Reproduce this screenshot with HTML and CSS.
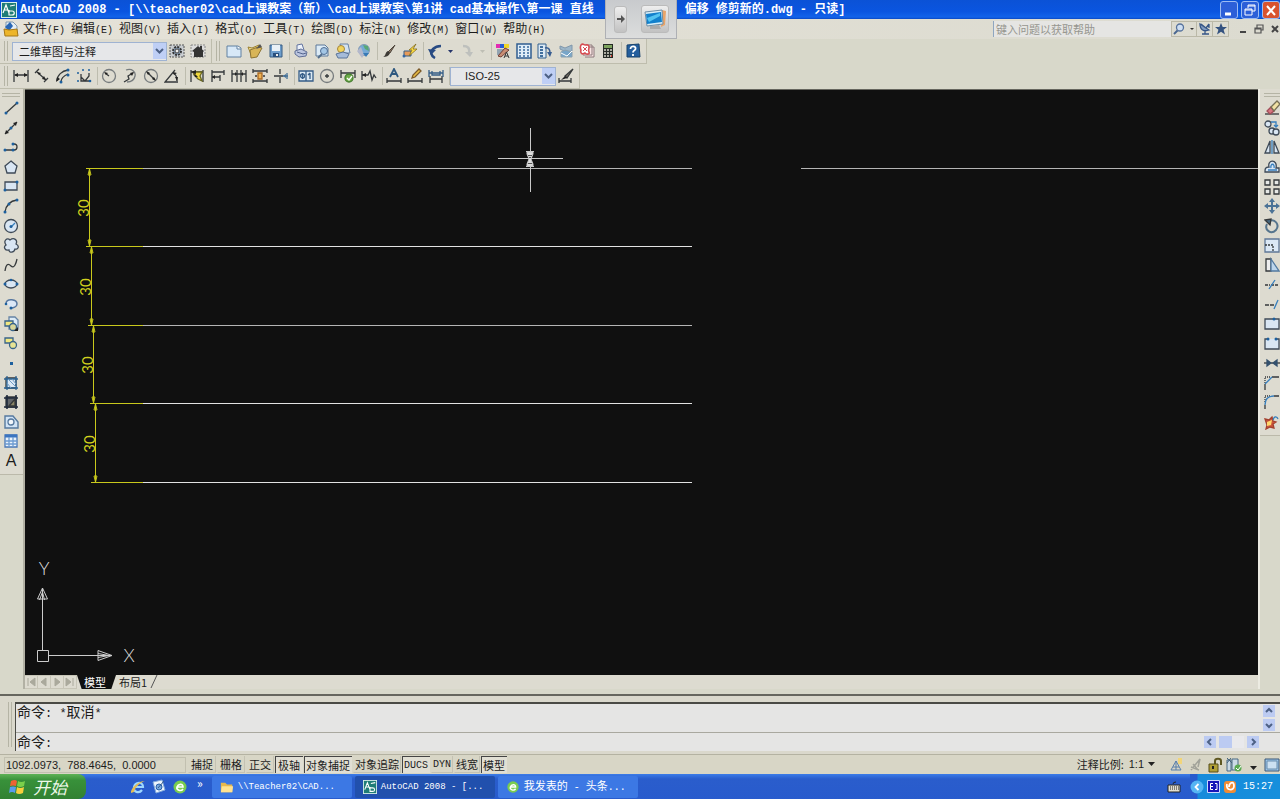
FILE: index.html
```html
<!DOCTYPE html>
<html lang="zh-CN">
<head>
<meta charset="utf-8">
<title>AutoCAD 2008</title>
<link rel="stylesheet" href="styles.css">
</head>
<body>
<header class="titlebar">
  <svg class="app-icon" width="16" height="16" viewBox="0 0 16 16"><rect x=".5" y=".5" width="15" height="15" fill="#1f7d77" stroke="#d8efe8"/><path d="M2 11L5 3l3 8M3 8h4M8 8v5h3c3 0 3-4 0-4H8M9 4l5-1" fill="none" stroke="#fff" stroke-width="1.2"/></svg>
  <h1 class="title"><span>AutoCAD 2008 - [\\teacher02\cad上课教案（新）\cad上课教案\第1讲 cad基本操作\第一课 直线</span><span class="title-rest">偏移 修剪新的.dwg - 只读]</span></h1>
  <div class="window-buttons">
    <button class="win" aria-label="最小化"><svg width="16" height="16" viewBox="0 0 16 16"><path d="M4 12h6" stroke="#fff" stroke-width="3"/></svg></button>
    <button class="win" aria-label="还原"><svg width="16" height="16" viewBox="0 0 16 16"><path d="M6 6V3h7v6h-3M3 7h7v6H3zM3 8h7M6 4h7" fill="none" stroke="#fff" stroke-width="1"/></svg></button>
    <button class="win win-close" aria-label="关闭"><svg width="16" height="16" viewBox="0 0 16 16"><path d="M4 4l8 9M12 4l-8 9" stroke="#fff" stroke-width="2"/></svg></button>
  </div>
</header>

<div class="floater">
  <button class="float-arrow" aria-label="展开"><svg width="10" height="12" viewBox="0 0 10 12"><path d="M1 5h4V2l4 4-4 4V7H1z" fill="#555"/></svg></button>
  <button class="float-screen" aria-label="屏幕"><svg width="26" height="26" viewBox="0 0 26 26"><path d="M20 4l4 1-1 14-4 2z" fill="#e8a469"/><path d="M3 6l17-2 1 14-16 2z" fill="#d9eef8" stroke="#6e8da5"/><path d="M4 8l15-2 1 10-15 2z" fill="#1280cc"/><path d="M5 12l13-5v3L7 16z" fill="#53c3f1"/><path d="M8 20l9-1 2 4H8z" fill="#aaa"/></svg></button>
</div>

<nav class="menubar">
  <svg width="16" height="16" viewBox="0 0 16 16"><path d="M3 1h7l4 4v9H3z" fill="#e5eef5" stroke="#7d98b1"/><path d="M2 6l5-5 3 4-4 5z" fill="#2866b4"/><path d="M1 8l5 1 8-1 1 7H2z" fill="#edb52a" stroke="#a67818"/></svg>
  <button>文件<span class="latin">(F)</span></button>
  <button>编辑<span class="latin">(E)</span></button>
  <button>视图<span class="latin">(V)</span></button>
  <button>插入<span class="latin">(I)</span></button>
  <button>格式<span class="latin">(O)</span></button>
  <button>工具<span class="latin">(T)</span></button>
  <button>绘图<span class="latin">(D)</span></button>
  <button>标注<span class="latin">(N)</span></button>
  <button>修改<span class="latin">(M)</span></button>
  <button>窗口<span class="latin">(W)</span></button>
  <button>帮助<span class="latin">(H)</span></button>
  <div class="infocenter">
    <input class="search" type="text" placeholder="键入问题以获取帮助" aria-label="键入问题以获取帮助">
    <button class="info info-wide" aria-label="搜索"><svg width="24" height="14" viewBox="0 0 24 14"><path d="M2 12l4-4" stroke="#4a6791" stroke-width="2"/><circle cx="8" cy="5.500" r="3.500" fill="#cfdff2" stroke="#56729c" stroke-width="1.300"/><path d="M18 6h4l-2 2z" fill="#333"/></svg></button>
    <button class="info" aria-label="通讯中心"><svg width="14" height="14" viewBox="0 0 14 14"><path d="M2 2c0 6 4 8 9 6zM4 12h7M7 9v3M3 2l5 4M8 6l3-4M11 2v4" fill="#7f9ac0" stroke="#365687" stroke-width="1.300"/></svg></button>
    <button class="info" aria-label="收藏夹"><svg width="14" height="14" viewBox="0 0 14 14"><path d="M7 1l1.700 4H13l-3.400 2.700L11 12.500 7 9.700l-4 2.800 1.400-4.800L1 5h4.300z" fill="#34527f"/></svg></button>
  </div>
  <div class="doc-buttons">
    <button aria-label="最小化文档"><svg width="10" height="10" viewBox="0 0 10 10"><path d="M2 8h6" stroke="#444" stroke-width="2"/></svg></button>
    <button aria-label="还原文档"><svg width="10" height="10" viewBox="0 0 10 10"><path d="M3 4V1h6v5H7M1 4h6v5H1zM1 5h6" fill="none" stroke="#555" stroke-width="1.200"/></svg></button>
    <button aria-label="关闭文档"><svg width="10" height="10" viewBox="0 0 10 10"><path d="M2 2l6 6M8 2L2 8" stroke="#444" stroke-width="2"/></svg></button>
  </div>
</nav>

<div class="toolrow">
  <div class="toolbar">
    <i class="grip"></i>
    <div class="combo combo-workspace"><select aria-label="工作空间"><option>二维草图与注释</option></select><svg width="13" height="16" viewBox="0 0 13 16"><path d="M3 6l3.500 3.500L10 6" fill="none" stroke="#4d6185" stroke-width="2"/></svg></div>
    <div class="tools">
      <button aria-label="工作空间设置"><svg viewBox="0 0 16 16"><path d="M1 2h14v12H1z" fill="#c9cdd1" stroke="#555" stroke-dasharray="2 1"/><circle cx="8" cy="8" r="4" fill="#8fa5bd" stroke="#333" stroke-width="2" stroke-dasharray="2 1.100"/><circle cx="8" cy="8" r="2" fill="#eee" stroke="#444"/></svg></button>
      <button aria-label="我的工作空间"><svg viewBox="0 0 16 16"><path d="M1 2h14v12H1z" fill="#ddd" stroke="#888" stroke-dasharray="2 1"/><path d="M2 8l6-5 6 5-1 1v5H4V9z" fill="#333"/><path d="M10 3h2v4h-2z" fill="#333"/></svg></button>
    </div>
  </div>
  <div class="toolbar">
    <i class="grip"></i>
    <div class="tools">
      <button aria-label="新建"><svg viewBox="0 0 16 16"><path d="M1 3h11l3 2v9H1z" fill="#d7e8f7" stroke="#6180a1"/><path d="M11 3v3h4" fill="#fff" stroke="#6180a1"/></svg></button>
      <button aria-label="打开"><svg viewBox="0 0 16 16"><path d="M1 4l4 1 7-3-2 9-5 3z" fill="#f0dc92" stroke="#9c812f"/><path d="M3 7l8-3 4 1-5 9-6 1z" fill="#d8b558" stroke="#8c7434"/><path d="M9 6l4-5 2 3z" fill="#555"/></svg></button>
      <button aria-label="保存"><svg viewBox="0 0 16 16"><path d="M2 2h12v12H2z" fill="#6d9dcc" stroke="#385c83"/><path d="M4 2h8v6H4z" fill="#e9f0f6"/><path d="M5 10h6v4H5z" fill="#294f7d"/><path d="M8 11h2v2H8z" fill="#eee"/></svg></button>
      <i class="sep"></i>
      <button aria-label="打印"><svg viewBox="0 0 16 16"><path d="M4 7V2l5-1 2 6" fill="#edf2fa" stroke="#6374a0"/><path d="M2 8l6-2 6 3-1 4-7 1-4-3z" fill="#bbc5df" stroke="#5f6e96"/><path d="M4 9l6 2 3-1" fill="none" stroke="#51638d"/></svg></button>
      <button aria-label="打印预览"><svg viewBox="0 0 16 16"><path d="M2 2h9l3 3v8H2z" fill="#dcebf6" stroke="#5c7899"/><circle cx="10" cy="8" r="3.500" fill="#a3c6e5" stroke="#506e94"/><path d="M8 11l-4 4" stroke="#516c8b" stroke-width="2"/></svg></button>
      <button aria-label="发布"><svg viewBox="0 0 16 16"><path d="M5 1h8l2 9H7z" fill="#d3e2f0" stroke="#6681a5"/><circle cx="6" cy="6" r="3.500" fill="#f1d35c" stroke="#a4853b"/><path d="M1 11l7-2 6 2-2 4H3z" fill="#a5bbd9" stroke="#5a7499"/></svg></button>
      <button aria-label="三维 DWF"><svg viewBox="0 0 16 16"><circle cx="8" cy="7" r="5.500" fill="#75a9d5" stroke="#8298b3"/><path d="M7 2l5 1 1 5-4-2z" fill="#59a875"/><path d="M1 8l4-4 3 8-2 3z" fill="#b3b8cb"/><path d="M7 10l3 4 3-4z" fill="#387ab6"/></svg></button>
      <i class="sep"></i>
      <button aria-label="特性匹配"><svg viewBox="0 0 16 16"><path d="M14 2l-7 7 2 1z" fill="#8a7561" stroke="#4d453c"/><path d="M7 8l2 2c-1 3-4 4-7 4 3-1 2-5 5-6z" fill="#3e3b36"/></svg></button>
      <button aria-label="块编辑器"><svg viewBox="0 0 16 16"><path d="M2 8h7v5H2z" fill="#e79b59" stroke="#395f87"/><path d="M14 1L7 7h3l-3 6 8-7h-4z" fill="#ffde43" stroke="#826c22" stroke-width=".8"/><circle cx="2" cy="13" r="1.500" fill="#3467a4"/></svg></button>
      <i class="sep"></i>
      <button aria-label="放弃"><svg viewBox="0 0 16 16"><path d="M8 15c-4-2-5-6-2-9 2-2 5-3 8-3" fill="none" stroke="#284b83" stroke-width="2.500"/><path d="M1 6l8 1-5 5z" fill="#284b83"/></svg></button>
      <button class="drop" aria-label="放弃列表"><svg viewBox="0 0 8 16"><path d="M1 7h5L3.500 10z" fill="#25346a"/></svg></button>
      <button aria-label="重做"><svg viewBox="0 0 16 16"><path d="M4 3c5 0 7 2 6 7" fill="none" stroke="#bec0bd" stroke-width="2.500"/><path d="M6 9h8l-3 5z" fill="#bec0bd"/></svg></button>
      <button class="drop" aria-label="重做列表"><svg viewBox="0 0 8 16"><path d="M1 7h5L3.500 10z" fill="#bebeb4"/></svg></button>
      <i class="sep"></i>
      <button aria-label="特性"><svg viewBox="0 0 16 16"><path d="M1 1h4v4H1z" fill="#e22bb3"/><path d="M5 1h4v4H5z" fill="#285bd7"/><path d="M9 1h5v4H9z" fill="#efd629"/><path d="M2 7h7M2 9h6M2 11h5" stroke="#486c93"/><path d="M3 13l7-8 4 2-8 7z" fill="#c88d74" stroke="#733e34"/><path d="M9 15l2.500-6L14 15M10 13h3" fill="none" stroke="#333"/></svg></button>
      <button aria-label="设计中心"><svg viewBox="0 0 16 16"><path d="M1 1h14v14H1z" fill="#e0edf7" stroke="#315e90" stroke-width="1.500"/><path d="M3 4h2M7 4h2M11 4h2M3 7h2M7 7h2M11 7h2M3 10h2M7 10h2M11 10h2M3 13h2M7 13h2M11 13h2" stroke="#396a9e" stroke-width="1.500"/></svg></button>
      <button aria-label="工具选项板"><svg viewBox="0 0 16 16"><path d="M1 1h8v14H1z" fill="#dce9f4" stroke="#33618e"/><path d="M3 4h3M3 7h3M3 10h3M3 13h3" stroke="#416f9d" stroke-width="2"/><path d="M8 5c4-1 5 2 5 5" fill="none" stroke="#385d91" stroke-width="1.500"/><path d="M10 9h5l-2 5z" fill="#385d91"/></svg></button>
      <button aria-label="图纸集"><svg viewBox="0 0 16 16"><path d="M2 3l5 2 7-3v6L8 9 2 6z" fill="#9db7c9" stroke="#8097ab"/><path d="M3 9l4-2 7 2v5H3z" fill="#78a6c9" stroke="#8ba0ad"/><path d="M3 10l6 3 5-5" stroke="#fff" fill="none"/></svg></button>
      <button aria-label="标记集"><svg viewBox="0 0 16 16"><path d="M5 4h10v10H6M3 2h10v10H4" fill="#f9e3e2" stroke="#8a797b"/><path d="M2 2c2-2 3 0 4 0s4-1 4 2-1 3 0 5-2 3-4 1c-3 2-5 0-4-3-1-2-1-3 0-5z" fill="#fff" stroke="#d64c52" stroke-width="1.600"/><path d="M4 4l4 4M8 4L4 8" stroke="#d64c52"/></svg></button>
      <button aria-label="快速计算器"><svg viewBox="0 0 16 16"><path d="M3 1h10v14H3z" fill="#252a25"/><path d="M4 2h8v3H4z" fill="#7da35e"/><path d="M4 7h8M4 10h8M4 13h8" stroke="#d8d7ca" stroke-width="1.500" stroke-dasharray="2 1"/><path d="M11 13h1" stroke="#cb322a" stroke-width="2"/></svg></button>
      <i class="sep"></i>
      <button aria-label="帮助"><svg viewBox="0 0 16 16"><path d="M2 2l12-1 1 13H2z" fill="#245e9d" stroke="#17426d"/><path d="M5.500 6c0-4 6-3 5 0-.5 1.500-2.500 1.500-2.500 3.500M8 11v2" fill="none" stroke="#fff" stroke-width="1.800"/></svg></button>
    </div>
  </div>
</div>

<div class="toolrow">
  <div class="toolbar toolbar-dim">
    <i class="grip"></i>
    <div class="tools ink">
      <button aria-label="线性"><svg viewBox="0 0 16 16"><path d="M1 2v12M15 2v12M2 7h12"/><path class="solid" d="M1 7l4-2v4zM15 7l-4-2v4z"/></svg></button>
      <button aria-label="对齐"><svg viewBox="0 0 16 16"><path d="M1 5l4-4M10 14l4-4M3 4l9 8"/><path class="solid" d="M3 4l4 1-2 2zM12 12l-4-1 2-3z"/></svg></button>
      <button aria-label="弧长"><svg viewBox="0 0 16 16"><path d="M2 13C2 7 7 3 13 2M6 14c0-4 2-6 7-8"/><path class="solid" d="M1 14l1-5 3 2z"/><g class="dot"><circle cx="13" cy="2" r="1.500"/><circle cx="13" cy="7" r="1.500"/><circle cx="6" cy="14" r="1.500"/></g></svg></button>
      <button aria-label="坐标"><svg viewBox="0 0 16 16"><path d="M5 6v7h9M5 9l4 4 4-5V5"/><g class="dot"><circle cx="7" cy="2" r="1"/><circle cx="13" cy="2" r="1"/><circle cx="2" cy="5" r="1"/><circle cx="2" cy="13" r="1"/><circle cx="14" cy="13" r="1.300"/></g></svg></button>
      <i class="sep"></i>
      <button aria-label="半径"><svg viewBox="0 0 16 16"><circle class="soft" cx="8" cy="8" r="6.500"/><path d="M4 5l4 3"/><path class="solid" d="M3 4l4 1-2 2z"/></svg></button>
      <button aria-label="折弯"><svg viewBox="0 0 16 16"><path class="soft" d="M4 2c6-2 10 2 9 6-1 5-4 6-8 6"/><path d="M2 14l5-3-1-3 5-3"/><path class="solid" d="M12 4L8 5l2 3z"/></svg></button>
      <button aria-label="直径"><svg viewBox="0 0 16 16"><circle class="soft" cx="8" cy="8" r="6.500"/><path d="M4 4l8 8"/><path class="solid" d="M3 3l4 2-2 2zM13 13l-4-2 2-2z"/></svg></button>
      <button aria-label="角度"><svg viewBox="0 0 16 16"><path d="M14 14H1L11 2M9 5c3 1 4 4 4 8"/><path class="solid" d="M9 4l4 1-3 2zM13 13l-2-4h3z"/></svg></button>
      <i class="sep"></i>
      <button aria-label="快速标注"><svg viewBox="0 0 16 16"><path d="M2 2v12M14 2v12M2 4h12"/><path d="M4 4l9 0-2 4 2 5-4-2-4-4z" fill="#f0d83d" stroke="#696723"/><path class="solid" d="M2 4l5-2v4zM5 5l4 4-3 0z"/></svg></button>
      <button aria-label="基线"><svg viewBox="0 0 16 16"><path d="M2 2v12M2 4h12M2 9h8M10 7v6M14 2v5"/><path class="solid" d="M2 9l3-2v4z"/></svg></button>
      <button aria-label="连续"><svg viewBox="0 0 16 16"><path d="M1 2v12M6 2v12M10 2v12M15 2v12M1 6h14"/><path class="solid" d="M6 6L4 4v4zM10 6l2-2v4z"/></svg></button>
      <button aria-label="标注间距"><svg viewBox="0 0 16 16"><path d="M1 1v4M15 1v4M1 11v4M15 11v4M1 3h14M1 13h14M3 8h2M11 8h2"/><path d="M6 5h4v6H6z" fill="#efb455" stroke="#a96922"/></svg></button>
      <button aria-label="标注打断"><svg viewBox="0 0 16 16"><path d="M7 1v5M7 9v6M1 8h9"/><path d="M10 8h5M14 5v6" stroke="#467198"/><path d="M10 8l3-2v4z" fill="#467198" stroke="none"/></svg></button>
      <i class="sep"></i>
      <button aria-label="公差"><svg viewBox="0 0 16 16"><path d="M1 3h14v10H1zM8 3v10" fill="#dce9f2" stroke="#365e88"/><circle cx="4.500" cy="8" r="2" stroke="#365e88"/><path d="M4.500 5v6M12 5v6M10 7l2-2" stroke="#365e88"/></svg></button>
      <button aria-label="圆心标记"><svg viewBox="0 0 16 16"><circle class="soft" cx="8" cy="8" r="6.500"/><path d="M8 6v4M6 8h4"/></svg></button>
      <button aria-label="检验"><svg viewBox="0 0 16 16"><path d="M1 2v8M15 2v8M1 5h14"/><circle cx="9" cy="10" r="4" fill="#6dac48" stroke="#467e32"/><path d="M7 10l2 2 3-4" stroke="#fff"/></svg></button>
      <button aria-label="折弯线性"><svg viewBox="0 0 16 16"><path d="M1 3v9M1 7h6l2-4 2 9 2-5 2 3"/><path class="solid" d="M1 7l4-2v4z"/></svg></button>
      <i class="sep"></i>
      <button aria-label="编辑标注"><svg viewBox="0 0 16 16"><path d="M1 10v5M15 10v5M1 13h14"/><path d="M4 9l4-8 4 8M6 6h4" stroke="#2e587f" stroke-width="1.800"/></svg></button>
      <button aria-label="编辑标注文字"><svg viewBox="0 0 16 16"><path d="M1 10v5M15 10v5M1 13h14"/><path d="M5 10l1-3 6-6 2 2-6 6z" fill="#e9bd43" stroke="#7b5928"/></svg></button>
      <button aria-label="标注更新"><svg viewBox="0 0 16 16"><path d="M2 8v7M14 8v7M2 11h12"/><path d="M1 2v7M15 2v7M1 5h14M4 3v4h8V3" stroke="#355d86"/></svg></button>
      <i class="sep"></i>
    </div>
    <div class="combo combo-dim"><select aria-label="标注样式"><option>ISO-25</option></select><svg width="13" height="16" viewBox="0 0 13 16"><path d="M3 6l3.500 3.500L10 6" fill="none" stroke="#4d6185" stroke-width="2"/></svg></div>
    <div class="tools ink">
      <button aria-label="标注样式管理"><svg viewBox="0 0 16 16"><path d="M1 10v5M13 10v5M1 13h12"/><path d="M15 1L7 8l2 2z" fill="#81776b"/><path class="solid" d="M7 8l2 2-6 2z"/></svg></button>
    </div>
  </div>
</div>

<main class="workspace">
  <aside class="side side-left">
    <div class="palette">
      <i class="grip-h"></i>
      <div class="stack stack-draw">
        <button aria-label="直线"><svg viewBox="0 0 16 16"><path d="M3 13L14 3"/><g class="dot"><circle cx="3" cy="13" r="1.500"/><circle cx="14" cy="3" r="1.500"/></g></svg></button>
        <button aria-label="构造线"><svg viewBox="0 0 16 16"><path d="M2 14L14 2"/><path class="solid" d="M2 14l1-4 3 3zM14 2l-4 1 3 3z"/><circle class="dot" cx="8" cy="8" r="1.500"/></svg></button>
        <button aria-label="多段线"><svg viewBox="0 0 16 16"><path d="M2 11h9c4 0 4-6 0-6"/><g class="dot"><circle cx="2" cy="11" r="1.500"/><circle cx="10" cy="11" r="1.500"/><circle cx="10" cy="5" r="1.500"/></g></svg></button>
        <button aria-label="正多边形"><svg viewBox="0 0 16 16"><path class="glass" d="M8 2l6 5-2 7H4L2 7z"/></svg></button>
        <button aria-label="矩形"><svg viewBox="0 0 16 16"><path class="glass" d="M2 4h12v8H2z"/><g class="dot"><circle cx="2" cy="12" r="1.500"/><circle cx="14" cy="4" r="1.500"/></g></svg></button>
        <button aria-label="圆弧"><svg viewBox="0 0 16 16"><path d="M2 14C3 7 7 3 14 2"/><g class="dot"><circle cx="2" cy="14" r="1.500"/><circle cx="6" cy="6" r="1.500"/><circle cx="14" cy="2" r="1.500"/></g></svg></button>
        <button aria-label="圆"><svg viewBox="0 0 16 16"><circle class="glass" cx="8" cy="8" r="6.500"/><path class="blue" d="M8 9l4-4"/><circle class="dot" cx="8" cy="8.500" r="1.500"/></svg></button>
        <button aria-label="修订云线"><svg viewBox="0 0 16 16"><path class="glass" d="M3 8C0 4 4 0 7 3c4-3 8 0 6 4 4 2 2 6-1 5-1 4-6 4-6 1-4 1-6-3-3-5z"/></svg></button>
        <button aria-label="样条曲线"><svg viewBox="0 0 16 16"><path d="M2 14c1-7 3-8 6-5s5-2 6-7"/></svg></button>
        <button aria-label="椭圆"><svg viewBox="0 0 16 16"><ellipse class="glass" cx="8" cy="8" rx="6" ry="4"/><g class="dot"><circle cx="2" cy="8" r="1.500"/><circle cx="14" cy="8" r="1.500"/><circle cx="8" cy="4" r="1.300"/></g></svg></button>
        <button aria-label="椭圆弧"><svg viewBox="0 0 16 16"><path d="M3 7c1-5 11-4 11 1 0 3-4 4-6 4" fill="#dce8f6" stroke="#5878a0" stroke-width="1.500"/><g class="dot"><circle cx="3" cy="8" r="1.300"/><circle cx="8" cy="12" r="1.500"/></g></svg></button>
        <button aria-label="插入块"><svg viewBox="0 0 16 16"><path d="M6 1h6l3 3v9H6z" fill="#dcebf7" stroke="#6684a5"/><path d="M2 5h8v5H2z" fill="#f1e881" stroke="#386489"/><circle cx="10" cy="11" r="3.500" fill="#d9d79a" stroke="#386489"/><path class="solid" d="M15 11v4h-4z"/></svg></button>
        <button aria-label="创建块"><svg viewBox="0 0 16 16"><path d="M2 3h8v5H2z" fill="#f1e881" stroke="#386489"/><circle cx="10" cy="10" r="3.500" fill="#e6e394" stroke="#386489"/></svg></button>
        <button aria-label="点"><svg viewBox="0 0 16 16"><path class="dot" d="M7 7h3v3H7z"/></svg></button>
        <button aria-label="图案填充"><svg viewBox="0 0 16 16"><path d="M3 3h10v10H3z" fill="#dbe8f4"/><path d="M4 1v14M13 1v14M1 4h14M1 13h14" stroke="#2d6595"/><path d="M4 8l4 5M5 4l8 8M9 4l4 5" stroke="#6f9dc6" stroke-width="1"/></svg></button>
        <button aria-label="渐变色"><svg viewBox="0 0 16 16"><path d="M3 3h10v10H3z" fill="#62666a"/><path d="M4 1v14M13 1v14M1 4h14M1 13h14" stroke="#202b3d" stroke-width="1.600"/><path d="M6 12l6-7v7z" fill="#8b8667"/></svg></button>
        <button aria-label="面域"><svg viewBox="0 0 16 16"><path d="M2 2h8l5 6v6H2z" fill="#d1e3f5" stroke="#56799e" stroke-width="1.400"/><circle cx="8" cy="8" r="3" fill="#f2f6fb" stroke="#56799e"/></svg></button>
        <button aria-label="表格"><svg viewBox="0 0 16 16"><path d="M2 2h12v12H2z" fill="#eaf2fb" stroke="#4a78b7"/><path d="M2 3h12" stroke="#3b74c0" stroke-width="3"/><path d="M2 8h12M2 11h12M6 4v10M10 4v10" stroke="#6c9bd1"/></svg></button>
        <button class="mtext" aria-label="多行文字">A</button>
      </div>
    </div>
  </aside>

  <section class="document">
    <div class="canvas">
      <svg class="drawing" width="100%" height="100%">
        <g class="object">
          <path class="dim" d="M118 78.500h549"/><path d="M118 156.500h549M118 313.500h549M118 392.500h549"/><path class="dim" d="M118 235.500h549"/>
          <line class="dim" x1="776" y1="78.500" x2="100%" y2="78.500"/>
        </g>
        <g class="measure">
          <path d="M61 78.500h57M61 156.500h57M63 235.500h55M65 313.500h53M66 392.500h52"/>
          <path d="M64.500 79v78M66.500 157v79M68.500 236v78M70.500 314v79"/>
          <path d="M63 85l1.500-6 1.500 6zM63 150l1.500 6 1.500-6zM65 163l1.500-6 1.500 6zM65 229l1.500 6 1.500-6zM67 242l1.500-6 1.500 6zM67 307l1.500 6 1.500-6zM69 320l1.500-6 1.500 6zM69 386l1.500 6 1.500-6z"/>
          <text transform="translate(64 118) rotate(-90)">30</text>
          <text transform="translate(66 197) rotate(-90)">30</text>
          <text transform="translate(68 275) rotate(-90)">30</text>
          <text transform="translate(70 354) rotate(-90)">30</text>
        </g>
        <g class="cursor">
          <path d="M473 68.500h65M505.500 38v64"/>
          <path class="glass-body" d="M502 62h6v2l-2 5 2 5v2h-6v-2l2-5-2-5z"/>
          <path d="M501 61.500h8M501 76.500h8"/><path class="sand" d="M503 65.500h4M504 67.500h2M503 73.500h4"/>
        </g>
      </svg>
      <svg class="ucs" width="120" height="120" viewBox="0 0 120 120">
        <path d="M12.500 95.500h11v11h-11zM17.500 95V33M24 100.500h63M17.500 33l-5 11h10zM17.500 37l-3 8M17.500 37l2 8M87 100.500l-14-5v10zM84 100.500l-11-2M84 100.500l-11 2"/>
        <text x="19" y="20">Y</text><text x="104" y="107">X</text>
      </svg>
    </div>
    <div class="tabs">
      <div class="tab-nav">
        <button aria-label="第一个"><svg viewBox="0 0 12 12"><path d="M3 2v8M10 2v8L5 6z"/></svg></button>
        <button aria-label="上一个"><svg viewBox="0 0 12 12"><path d="M8 2v8L3 6z"/></svg></button>
        <button aria-label="下一个"><svg viewBox="0 0 12 12"><path d="M4 2v8l5-4z"/></svg></button>
        <button aria-label="最后一个"><svg viewBox="0 0 12 12"><path d="M9 2v8M2 2v8l5-4z"/></svg></button>
      </div>
      <button class="tab tab-active">模型</button>
      <button class="tab">布局1</button>
      <svg class="tab-end" width="8" height="13" viewBox="0 0 8 13"><path d="M1 13L7 0" stroke="#555"/></svg>
    </div>
  </section>

  <aside class="side side-right">
    <div class="palette">
      <i class="grip-h"></i>
      <div class="stack stack-modify">
        <button aria-label="删除"><svg viewBox="0 0 16 16"><path d="M1 14h14"/><path d="M3 11l3 3 4-3-3-4z" fill="#d77780" stroke="#a24d59"/><path d="M7 7l6-6 3 3-6 7z" fill="#f0e0a4" stroke="#766f55"/></svg></button>
        <button aria-label="复制"><svg viewBox="0 0 16 16"><circle class="glass" cx="4" cy="4" r="3"/><circle class="glass" cx="8" cy="11" r="3"/><circle class="glass" cx="12" cy="12" r="3"/><path class="blue" d="M7 2h5v4M10 5l2 2 2-2"/></svg></button>
        <button aria-label="镜像"><svg viewBox="0 0 16 16"><path class="glass" d="M6 2v12H1zM10 2v12h5z"/><path class="blue" d="M8 1v14"/></svg></button>
        <button aria-label="偏移"><svg viewBox="0 0 16 16"><path class="glass" d="M1 13h14V9h-3c2-9-9-9-7-1-4 0-4 2-4 5z"/><path class="blue" d="M4 11h9M7 9c-1-5 4-5 3 0"/></svg></button>
        <button aria-label="阵列"><svg viewBox="0 0 16 16"><path d="M1 1h5v5H1zM10 1h5v5h-5zM1 10h5v5H1zM10 10h5v5h-5z" fill="#e6e8e6"/></svg></button>
        <button aria-label="移动"><svg viewBox="0 0 16 16"><path d="M8 2v12M2 8h12" stroke="#4c7396" stroke-width="2"/><path d="M8 0l3 4H5zM8 16l3-4H5zM0 8l4-3v6zM16 8l-4-3v6z" fill="#4c7396" stroke="none"/></svg></button>
        <button aria-label="旋转"><svg viewBox="0 0 16 16"><path d="M5 3c6-3 11 4 7 9-5 5-12 0-9-6" fill="none" stroke="#56758d" stroke-width="2"/><path d="M1 2l6-1-1 6z" fill="#46677f"/></svg></button>
        <button aria-label="缩放"><svg viewBox="0 0 16 16"><path d="M1 2h14v13H1z" fill="#dbe8f5" stroke="#607896"/><path d="M1 8h8v7" fill="none" stroke-dasharray="2 1"/></svg></button>
        <button aria-label="拉伸"><svg viewBox="0 0 16 16"><path d="M2 2h5v12H2z" fill="#eee"/><path d="M7 2l8 12H7z" fill="#bdd6ec" stroke="#527aa0"/></svg></button>
        <button aria-label="修剪"><svg viewBox="0 0 16 16"><path d="M1 8h5M7 8h8" stroke-dasharray="3 1"/><path class="blue" d="M5 12l6-9"/></svg></button>
        <button aria-label="延伸"><svg viewBox="0 0 16 16"><path d="M1 9h10" stroke-dasharray="4 1"/><path class="blue" d="M10 13l4-9"/></svg></button>
        <button aria-label="打断于点"><svg viewBox="0 0 16 16"><path class="glass" d="M1 3h14v10H1z"/><circle class="dot" cx="10" cy="3" r="1.500"/></svg></button>
        <button aria-label="打断"><svg viewBox="0 0 16 16"><path class="glass" d="M4 3H1v10h14V3h-3"/><g class="dot"><circle cx="4" cy="3" r="1.500"/><circle cx="12" cy="3" r="1.500"/></g></svg></button>
        <button aria-label="合并"><svg viewBox="0 0 16 16"><path d="M0 8h16"/><path d="M3 5l4 3-4 3zM13 5L9 8l4 3z" fill="#34516e" stroke="#34516e"/></svg></button>
        <button aria-label="倒角"><svg viewBox="0 0 16 16"><path d="M1 15V9M8 2h7"/><path d="M1 8V2h6" stroke-dasharray="1 1"/><path class="blue" d="M1 9l7-7"/></svg></button>
        <button aria-label="圆角"><svg viewBox="0 0 16 16"><path d="M1 15v-4M10 2h5"/><path d="M1 8V2h6" stroke-dasharray="1 1"/><path class="blue" d="M1 11c0-6 3-9 9-9"/></svg></button>
        <button aria-label="分解"><svg viewBox="0 0 16 16"><path d="M1 5l4 1 3-3 1 4 3 1-3 2 1 4-4-1-4 2 1-4z" fill="#cf563b" stroke="#a3412f"/><path d="M3 8l5-2-1 5-4 1z" fill="#ffd66a" stroke="none"/><path class="blue" d="M9 6c1-4 4-4 5-1"/></svg></button>
      </div>
    </div>
  </aside>
</main>

<section class="command">
  <i class="grip command-grip"></i>
  <div class="command-box">
    <div class="history"><p>命令<span class="mono">: *</span>取消<span class="mono">*</span></p>
      <div class="scroll-v">
        <button class="scroll" aria-label="向上滚动"><svg viewBox="0 0 12 12"><path d="M3 7l3-3 3 3"/></svg></button>
        <button class="scroll" aria-label="向下滚动"><svg viewBox="0 0 12 12"><path d="M3 5l3 3 3-3"/></svg></button>
      </div>
    </div>
    <div class="prompt"><label for="cmd">命令<span class="mono">:</span></label><input id="cmd" type="text">
      <div class="scroll-h">
        <button class="scroll" aria-label="向左滚动"><svg viewBox="0 0 12 12"><path d="M7 3L4 6l3 3"/></svg></button>
        <span class="track"><i class="thumb"></i></span>
        <button class="scroll" aria-label="向右滚动"><svg viewBox="0 0 12 12"><path d="M5 3l3 3-3 3"/></svg></button>
      </div>
    </div>
  </div>
</section>

<footer class="status">
  <output class="coords">1092.0973,&nbsp; 788.4645,&nbsp; 0.0000</output>
  <div class="modes">
    <button>捕捉</button><button>栅格</button><button>正交</button><button class="on">极轴</button>
    <button class="tight on">对象捕捉</button><button class="tight">对象追踪</button>
    <button class="tight on latin">DUCS</button><button class="tight latin">DYN</button><button class="tight">线宽</button><button class="tight on">模型</button>
  </div>
  <div class="scale"><span>注释比例:</span><button>1:1 <svg width="7" height="5" viewBox="0 0 7 5"><path d="M0 0h7L3.500 4z" fill="#222"/></svg></button></div>
  <div class="status-icons">
    <button aria-label="注释可见性"><svg viewBox="0 0 16 16"><path d="M2 13L7 4l5 9zM7 4v9M4 10h6" fill="none" stroke="#587eaa"/><path d="M9 1h4v6H9z" fill="#f2d579"/></svg></button>
    <button aria-label="自动添加比例"><svg viewBox="0 0 16 16"><path d="M3 13L12 2l-2 8M3 10l8 3M5 7l5 6" fill="none" stroke="#a2a39a" stroke-width="1.500"/></svg></button>
    <button aria-label="锁定"><svg viewBox="0 0 16 16"><path d="M8 8V4c0-3 6-3 6 0v4" fill="none" stroke="#5e5721" stroke-width="2"/><path d="M2 7h9v8H2z" fill="#b1a036" stroke="#554d1b"/><path d="M6 9v3" stroke="#222" stroke-width="2"/></svg></button>
    <button aria-label="状态"><svg viewBox="0 0 16 16"><path d="M1 3h4v11H1zM6 2h6v11H6z" fill="#cbdae5" stroke="#486883"/><path d="M1 1l5 5M5 1L1 6" stroke="#46647d"/><circle cx="12" cy="11" r="3.500" fill="#5aaa52"/><path d="M10 11l2 2 3-4" fill="none" stroke="#fff"/></svg></button>
    <button aria-label="状态栏菜单"><svg viewBox="0 0 16 16"><path d="M5 9h7l-3.500 4z" fill="#222"/></svg></button>
    <button aria-label="全屏显示"><svg viewBox="0 0 16 16"><path d="M1 2h14v12H1z" fill="#9ec5e7" stroke="#3a5979"/><path d="M3 4h10v8H3z" fill="#cce1f2" stroke="#688eae"/></svg></button>
  </div>
</footer>

<div class="taskbar">
  <button class="start"><svg width="18" height="18" viewBox="0 0 18 18"><path d="M2 3q4-2 6 0L7 8q-3-1-6 0z" fill="#ef6334"/><path d="M9 3q3 2 7 0l-1 5q-4 2-7 0z" fill="#7bd04b"/><path d="M1 9q3-1 6 0l-1 6q-3-2-6 0z" fill="#5a9bee"/><path d="M8 9q3 2 7 0l-1 6q-4 2-7 0z" fill="#f8cf3c"/></svg>开始</button>
  <div class="quick">
    <button aria-label="Internet Explorer"><svg viewBox="0 0 16 16"><path d="M12 11c-3 4-9 2-8-3s9-6 9 0H5" fill="none" stroke="#9ed7ff" stroke-width="2.200"/><path d="M1 14C0 10 8 2 15 2c-4 1-10 6-11 11z" fill="#e4bd55"/></svg></button>
    <button aria-label="显示桌面"><svg viewBox="0 0 16 16"><path d="M2 3l9-2 3 10-9 3z" fill="#edf5fd" stroke="#82aada"/><circle cx="8" cy="8" r="3" fill="#75a8df" stroke="#2a61a9"/><path d="M7 9l6-7" stroke="#385d8b"/></svg></button>
    <button aria-label="浏览器"><svg viewBox="0 0 16 16"><circle cx="8" cy="8" r="6.500" fill="#79cc50"/><path d="M11 10c-2 3-7 1-6-2s6-4 6 0H5" fill="none" stroke="#fff" stroke-width="1.600"/></svg></button>
    <button class="more" aria-label="更多">»</button>
  </div>
  <div class="tasks">
    <button class="task"><svg viewBox="0 0 16 16"><path d="M1 3h5l2 2h6v9H1z" fill="#e7b84d"/><path d="M2 7h13l-1 7H1z" fill="#ffe391"/></svg><span>\\Teacher02\CAD...</span></button>
    <button class="task task-active"><svg viewBox="0 0 16 16"><rect x=".5" y=".5" width="15" height="15" fill="#1f7d77" stroke="#d8efe8"/><path d="M2 11L5 3l3 8M3 8h4M8 8v5h3c3 0 3-4 0-4H8M9 4l5-1" fill="none" stroke="#fff" stroke-width="1.200"/></svg><span>AutoCAD 2008 - [...</span></button>
    <button class="task task-cjk"><svg viewBox="0 0 16 16"><circle cx="8" cy="8" r="6.500" fill="#79cc50"/><path d="M11 10c-2 3-7 1-6-2s6-4 6 0H5" fill="none" stroke="#fff" stroke-width="1.600"/></svg><span>我发表的<span class="mono-task"> - </span>头条<span class="mono-task">...</span></span></button>
  </div>
  <button class="keyboard" aria-label="键盘"><svg width="14" height="12" viewBox="0 0 14 12"><path d="M6 3q0-2 3-2" fill="none" stroke="#222"/><path d="M1 4h12v7H1z" fill="#e2dfd1" stroke="#222"/><path d="M3 6h9M3 8h9" stroke="#222" stroke-dasharray="1 1"/></svg></button>
  <div class="tray">
    <button class="tray-toggle" aria-label="隐藏图标"><svg width="14" height="14" viewBox="0 0 14 14"><circle cx="7" cy="7" r="6.500" fill="#55b5f3"/><path d="M8.500 4l-3 3 3 3" fill="none" stroke="#fff" stroke-width="1.800"/></svg></button>
    <svg width="13" height="15" viewBox="0 0 13 15"><path d="M.5 1.500h12v12H.5z" fill="#1616b8" stroke="#cbd7ff"/><path d="M6 4.500H3.500v6H6M3.500 7.500H6M8 4.500h2v6H8" fill="none" stroke="#fff"/></svg>
    <svg width="14" height="14" viewBox="0 0 14 14"><rect x="1" y="1" width="12" height="12" rx="3" fill="#ef8c35"/><path d="M4 4c-2 6 7 8 7 2S6 3 6 7" fill="none" stroke="#fff" stroke-width="1.800"/></svg>
    <time class="latin">15:27</time>
  </div>
</div>
</body>
</html>
```
FILE: styles.css
```css
* { box-sizing: border-box; }
html, body { height: 100%; }
body {
  margin: 0;
  display: flex;
  flex-direction: column;
  overflow: hidden;
  background: #d8d8ca;
  color: #1c1c1c;
  font: 12px/16px "Noto Sans CJK SC", sans-serif;
}
button, input, select { font: inherit; color: inherit; }
button { margin: 0; padding: 0; border: 0; background: none; }
svg { display: block; flex: none; }
.latin { font-family: "Liberation Mono", "Noto Sans CJK SC", monospace; font-size: 10px; }
.mono { font-family: "Liberation Mono", monospace; font-size: 12px; white-space: pre; }

/* Title bar */
.titlebar {
  display: flex;
  align-items: center;
  flex: none;
  height: 19px;
  padding-left: 1px;
  gap: 3px;
  overflow: hidden;
  background: linear-gradient(#0b52d6, #0a55e0 60%, #1263ea 90%, #0a48c4);
}
.title {
  display: flex;
  flex: 1;
  gap: 91px;
  margin: 0;
  overflow: hidden;
  white-space: nowrap;
  color: #fff;
  font: bold 12px/18px "Liberation Mono", "Noto Sans CJK SC", monospace;
}
.window-buttons { display: flex; gap: 3px; }
.win {
  width: 18px;
  height: 18px;
  border: 1px solid #9dbcf3;
  border-radius: 3px;
  background: #2c5fd8;
}
.win-close { background: #d9532f; }

/* Screen-share control hanging from the top edge */
.floater {
  position: absolute;
  top: 0;
  left: 605px;
  display: flex;
  align-items: center;
  gap: 14px;
  width: 72px;
  height: 39px;
  padding-left: 8px;
  border: 1px solid #aeb0b4;
  border-top: 0;
  background: linear-gradient(#c8cacd, #dcdddd);
}
.float-arrow, .float-screen {
  display: flex;
  align-items: center;
  justify-content: center;
  border: 1px solid #bbb;
  border-radius: 3px;
  background: linear-gradient(#eee, #c2c2c2);
}
.float-arrow { width: 13px; height: 27px; }
.float-screen { width: 28px; height: 28px; }

/* Menu bar */
.menubar {
  display: flex;
  align-items: center;
  flex: none;
  gap: 6px;
  height: 20px;
  padding-left: 3px;
  background: linear-gradient(90deg, #e5e2d8, #dcdbd0);
}
.menubar > svg { margin-right: -2px; }
.menubar > button { white-space: nowrap; }
.infocenter { display: flex; align-items: center; margin-left: auto; margin-right: 3px; }
.search {
  width: 178px;
  height: 16px;
  padding: 0 2px;
  border: 0;
  border-left: 1px solid #8fa6c0;
  background: #e5e5e3;
  font-size: 11px;
}
.search::placeholder { color: #96968f; opacity: 1; }
.info {
  display: flex;
  align-items: center;
  justify-content: center;
  width: 16px;
  height: 16px;
  border: 1px solid #bbb9a8;
  border-left: 0;
}
.info-wide { width: 26px; border-left: 1px solid #bbb9a8; }
.doc-buttons { display: flex; gap: 6px; }

/* Horizontal toolbars */
.toolrow { display: flex; flex: none; height: 25px; }
.toolbar {
  display: flex;
  align-items: center;
  padding: 0 3px 0 4px;
  border: 1px solid #bebdad;
  border-width: 0 1px 1px 0;
  background: #dddbd0;
}
.grip {
  flex: none;
  width: 4px;
  height: 20px;
  margin-right: 4px;
  border: 1px solid #b5b4a5;
  border-width: 0 1px;
}
.toolbar-dim .grip { margin-right: 3px; }
.tools { display: flex; align-items: center; gap: 1px; }
.tools button { display: flex; align-items: center; justify-content: center; width: 20px; height: 20px; }
.tools svg { width: 16px; height: 16px; }
.tools .drop { width: 10px; }
.tools .drop svg { width: 8px; }
.sep { flex: none; width: 3px; height: 18px; border-right: 1px solid #bdbcae; }
.combo {
  display: flex;
  align-items: center;
  height: 19px;
  border: 1px solid #9fb3d2;
  background: #e6e7e9;
}
.combo select { flex: 1; min-width: 0; height: 17px; padding: 0 6px; border: 0; appearance: none; background: transparent; font-size: 11px; line-height: 16px; }
.combo svg { background: #bfcff5; }
.combo-workspace { width: 155px; }
.combo-dim { width: 106px; }
.combo-dim select { padding-left: 14px; font-family: "Liberation Sans", sans-serif; }

/* Line icons */
.ink svg, .stack svg { fill: none; stroke: #35393b; stroke-width: 1.3; }
.ink .soft { stroke: #777c7e; }
.ink .solid, .stack .solid { fill: #222; stroke: none; }
.dot { fill: #1d609e; stroke: none; }
.stack .glass { fill: #d9e6f3; stroke: #3e4a57; }
.stack .blue { stroke: #377fbd; }

/* Work area */
.workspace { display: flex; flex: 1; min-height: 0; padding-bottom: 5px; }
.side { flex: none; overflow: hidden; }
.side-left { width: 25px; border-right: 2px solid #b2b1a4; }
.side-right { width: 22px; border-left: 2px solid #ecebe2; }
.palette { padding: 4px 3px 4px 2px; border-bottom: 1px solid #bbb9aa; background: #dddbd0; }
.side-right .palette { padding: 4px 0 4px 4px; }
.grip-h { display: block; height: 4px; margin-bottom: 2px; border: 1px solid #b5b4a5; border-width: 1px 0; }
.stack { display: flex; flex-direction: column; justify-content: space-between; }
.stack button { display: flex; align-items: center; justify-content: center; width: 18px; height: 18px; }
.stack svg { width: 16px; height: 16px; }
.side-right .stack button { width: 16px; }
.stack-draw { height: 371px; }
.stack-modify { height: 332px; }
.stack .mtext { font: 16px/18px "Liberation Sans", sans-serif; }
.document { display: flex; flex: 1; flex-direction: column; min-width: 0; }
.canvas { position: relative; flex: 1; min-height: 0; overflow: hidden; border-top: 1px solid #66665e; background: #101010; }
.drawing { position: absolute; inset: 0; fill: none; }
.object { stroke: #e2e2e2; }
.object .dim { stroke: #b5b5b5; }
.measure { stroke: #c9c91c; }
.measure text { fill: #d2d21e; stroke: none; font: 15px/16px Lato, sans-serif; text-anchor: middle; }
.cursor { stroke: #c8c8c8; }
.cursor .glass-body { fill: #ddd; }
.cursor .sand { stroke: #555; }
.ucs { position: absolute; left: 0; bottom: 0; fill: none; stroke: #ccc; }
.ucs text { fill: #ddd; stroke: none; font: 300 18px/20px Lato, sans-serif; text-anchor: middle; }

/* Layout tabs */
.tabs { display: flex; flex: none; height: 14px; background: #dddbd0; }
.tab-nav { display: flex; }
.tab-nav button { width: 13px; border: 1px solid #c7c5b7; border-left: 0; }
.tab-nav svg { width: 12px; height: 12px; fill: #aaa99c; stroke: #aaa99c; }
.tab { padding: 0 3px; font-size: 11px; line-height: 13px; }
.tab-active {
  padding: 0 10px 0 7px;
  background: #101010;
  color: #fff;
  clip-path: polygon(0 0, 100% 0, 88% 100%, 12% 100%);
}

/* Command line */
.command { display: flex; flex: none; padding: 6px 0 3px 8px; border-top: 2px solid #66665e; background: #dad8cc; }
.command-grip { height: 45px; margin-right: 3px; }
.command-box { flex: 1; border: solid #4a4a45; border-width: 2px 0 0 1px; background: #e5e5e4; font-size: 14px; }
.history { display: flex; justify-content: space-between; height: 29px; padding-right: 5px; border-bottom: 1px solid #a9a89f; }
.history p { margin: 0; padding-left: 1px; line-height: 14px; }
.prompt { display: flex; align-items: center; height: 18px; padding-left: 1px; padding-right: 21px; line-height: 16px; }
.prompt input { flex: 1; min-width: 0; border: 0; padding: 0 4px; height: 16px; background: transparent; outline: 0; }
.scroll { width: 12px; height: 12px; background: #bccbf2; }
.scroll svg { width: 12px; height: 12px; fill: none; stroke: #4d6185; stroke-width: 2; }
.scroll-v { display: flex; flex-direction: column; gap: 2px; padding-top: 1px; }
.scroll-h { display: flex; gap: 3px; }
.track { width: 25px; height: 12px; background: #e9e9ec; }
.thumb { display: block; width: 13px; height: 12px; background: #bccbf2; }

/* Status bar */
.status { display: flex; align-items: center; flex: none; height: 20px; padding-left: 4px; border-top: 1px solid #b4b2a2; background: #d8d6c6; font-size: 11px; line-height: 15px; white-space: nowrap; }
.coords { width: 182px; height: 16px; padding-left: 1px; border: 1px solid #c2c0b0; font-family: "Liberation Sans", sans-serif; }
.modes { display: flex; gap: 1px; margin-left: 2px; }
.modes button { height: 17px; padding: 0 2px; border: 1px solid #c4c2b3; border-width: 0 1px 1px 0; border-left: 1px solid transparent; line-height: 16px; }
.modes .tight { padding: 0 1px; }
.modes .latin { padding-top: 2px; line-height: 14px; }
.modes .on { border: 1px solid #444; border-width: 1px 0 0 1px; padding-right: 3px; background: #e1dfd4; line-height: 15px; }
.modes .tight.on { padding-right: 2px; }
.modes .latin.on { padding-top: 0; }
.scale { display: flex; gap: 5px; margin-left: auto; }
.scale button { display: flex; align-items: center; gap: 4px; font-family: "Liberation Sans", sans-serif; }
.status-icons { display: flex; gap: 3px; margin-left: 14px; }
.status-icons button { width: 16px; }
.status-icons svg { width: 16px; height: 16px; }

/* Taskbar */
.taskbar { display: flex; align-items: center; flex: none; height: 25px; overflow: hidden; background: linear-gradient(#3b7ce8, #2a5dcc 20%, #285bcd); color: #fff; }
.start { display: flex; align-items: center; gap: 6px; width: 86px; height: 25px; padding-left: 9px; border-radius: 0 8px 8px 0; background: linear-gradient(#5eb256, #38913a 25%, #328132); color: #edf8e8; font-size: 17px; font-style: italic; line-height: 22px; }
.quick { display: flex; align-items: center; gap: 5px; margin-left: 44px; }
.quick svg { width: 16px; height: 16px; }
.more { margin: 0 0 8px 4px; font-size: 12px; line-height: 12px; }
.tasks { display: flex; gap: 3px; margin-left: 9px; }
.task { display: flex; align-items: center; gap: 4px; width: 140px; height: 22px; padding-left: 8px; border-radius: 2px; background: #3c78e4; font: 9px/16px "Liberation Mono", "Noto Sans CJK SC", monospace; white-space: nowrap; }
.task svg { width: 14px; height: 14px; }
.task-active { background: #2150ad; }
.task-cjk { font-size: 11px; font-family: "Noto Sans CJK SC", sans-serif; }
.mono-task { font: 10px/16px "Liberation Mono", monospace; }
.keyboard { margin: 0 9px 0 auto; }
.tray { display: flex; align-items: center; gap: 3px; height: 25px; padding-right: 7px; background: linear-gradient(90deg, #285bcd 7px, #168bdb 8px, #168fdc); }
.tray time { margin-left: 3px; }
```
